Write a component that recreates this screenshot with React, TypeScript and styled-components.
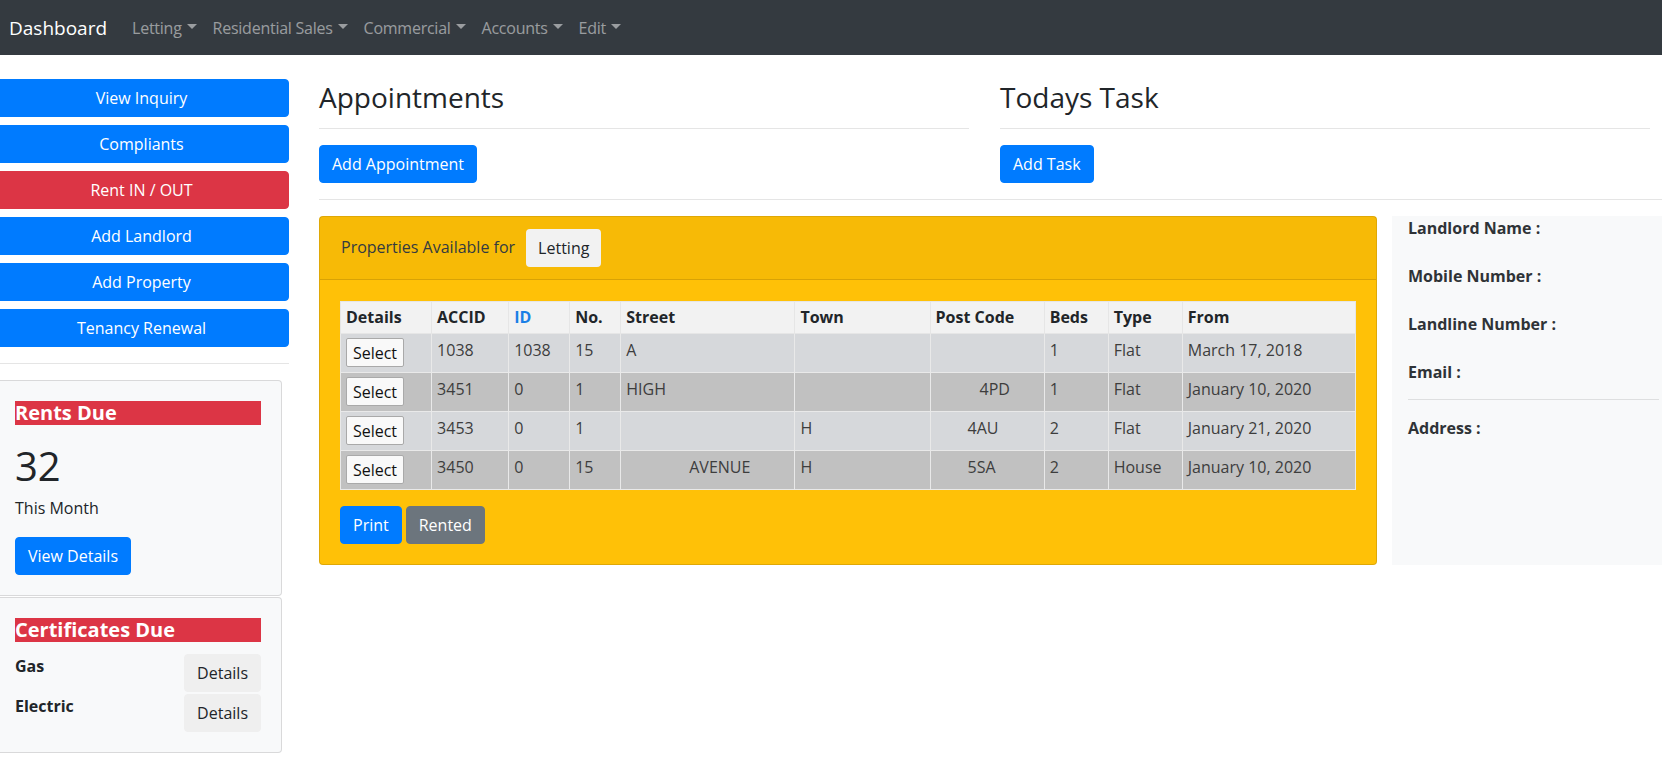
import React from "react";
import styled, { createGlobalStyle } from "styled-components";

const Global = createGlobalStyle`
  html, body { margin: 0; padding: 0; }
  body {
    font-family: "Open Sans", "Noto Sans", sans-serif;
    font-size: 16px;
    line-height: 1.5;
    color: #212529;
    background: #fff;
    width: 1662px;
    overflow: hidden;
  }
  * { box-sizing: border-box; }
  button { font-family: inherit; }
`;

const Page = styled.div`
  width: 1662px;
  min-height: 758px;
  overflow: hidden;
`;

const Navbar = styled.nav`
  height: 55px;
  background: #343a40;
  display: flex;
  align-items: center;
  padding: 0 9px;
`;

const Brand = styled.span`
  font-size: 19px;
  line-height: 30px;
  color: #fff;
  margin-right: 17px;
`;

const NavLink = styled.span`
  color: rgba(255, 255, 255, 0.5);
  padding: 0 8px;
  display: inline-flex;
  align-items: center;
  line-height: 24px;
  letter-spacing: -0.25px;
  &::after {
    content: "";
    display: inline-block;
    margin-left: 5px;
    margin-bottom: 3px;
    border-top: 5px solid;
    border-left: 5px solid transparent;
    border-right: 5px solid transparent;
  }
`;

const Layout = styled.div`
  display: flex;
  align-items: flex-start;
`;

const Sidebar = styled.aside`
  width: 295px;
  margin-left: -6px;
  padding-top: 24px;
  display: flex;
  flex-direction: column;
`;

const SideButton = styled.button<{ $tone?: "primary" | "danger" }>`
  height: 38px;
  width: 100%;
  border: 1px solid ${(p) => (p.$tone === "danger" ? "#dc3545" : "#007bff")};
  background: ${(p) => (p.$tone === "danger" ? "#dc3545" : "#007bff")};
  color: #fff;
  font-size: 16px;
  line-height: 24px;
  border-radius: 4px;
  padding: 6px 12px;
  margin-bottom: 8px;
  cursor: pointer;
`;

const Rule = styled.hr<{ $mt?: number; $mb?: number }>`
  border: 0;
  border-top: 1px solid rgba(0, 0, 0, 0.1);
  margin: ${(p) => p.$mt ?? 16}px 0 ${(p) => p.$mb ?? 16}px;
  height: 0;
`;

const SideCard = styled.section<{ $gap?: number }>`
  width: 288px;
  background: #f8f9fa;
  border: 1px solid rgba(0, 0, 0, 0.125);
  border-radius: 4px;
  padding: 20px;
  margin-bottom: ${(p) => p.$gap ?? 0}px;
`;

const RedTitle = styled.h5`
  margin: 0;
  background: #dc3545;
  color: #fff;
  font-size: 20px;
  line-height: 24px;
  font-weight: 700;
`;

const BigNumber = styled.div`
  font-size: 40px;
  line-height: 48px;
  font-weight: 500;
  margin-top: 17px;
`;

const CardText = styled.p`
  margin: 6px 0 17px;
  line-height: 24px;
`;

const Button = styled.button<{ $tone: "primary" | "secondary" | "light" }>`
  height: 38px;
  padding: 6px 12px;
  font-size: 16px;
  line-height: 24px;
  border-radius: 4px;
  border: 1px solid
    ${(p) => (p.$tone === "primary" ? "#007bff" : p.$tone === "secondary" ? "#6c757d" : "#efefef")};
  background: ${(p) => (p.$tone === "primary" ? "#007bff" : p.$tone === "secondary" ? "#6c757d" : "#efefef")};
  color: ${(p) => (p.$tone === "light" ? "#212529" : "#fff")};
  cursor: pointer;
`;

const CertList = styled.div`
  margin-top: 12px;
  display: flex;
  flex-direction: column;
  gap: 2px;
`;

const CertRow = styled.div`
  display: flex;
  justify-content: space-between;
  align-items: flex-start;
`;

const CertLabel = styled.span`
  font-weight: 700;
  line-height: 24px;
`;

const Main = styled.main`
  flex: 1;
  padding: 24px 0 0 30px;
  min-width: 0;
`;

const TopRow = styled.div`
  display: grid;
  grid-template-columns: 650px 650px;
  column-gap: 31px;
`;

const Column = styled.div`
  display: flex;
  flex-direction: column;
  align-items: flex-start;
`;

const Heading = styled.h2`
  margin: 0;
  font-size: 28px;
  line-height: 36px;
  font-weight: 500;
  color: #212529;
`;

const FullRule = styled.hr`
  border: 0;
  border-top: 1px solid rgba(0, 0, 0, 0.1);
  margin: 16px 0 16px;
  height: 0;
  width: 1400px;
`;

const ColumnRule = styled.hr`
  border: 0;
  border-top: 1px solid rgba(0, 0, 0, 0.1);
  margin: 13px 0 16px;
  height: 0;
  width: 100%;
`;

const BottomRow = styled.div`
  display: grid;
  grid-template-columns: 1058px 1fr;
  column-gap: 15px;
  align-items: stretch;
`;

const YellowCard = styled.section`
  background: #ffc107;
  border: 1px solid rgba(0, 0, 0, 0.125);
  border-radius: 4px;
  display: flex;
  flex-direction: column;
`;

const CardHeader = styled.div`
  display: flex;
  align-items: center;
  gap: 11px;
  padding: 12px 20px;
  background: rgba(0, 0, 0, 0.03);
  border-bottom: 1px solid rgba(0, 0, 0, 0.125);
  color: #212529;
`;

const HeaderText = styled.span`
  padding-left: 1px;
  margin-top: -3px;
  color: #343a40;
`;

const LightTag = styled.span`
  display: inline-flex;
  align-items: center;
  height: 38px;
  padding: 0 12px;
  background: #f2f2f2;
  border-radius: 4px;
  color: #212529;
`;

const CardBody = styled.div`
  padding: 21px 20px 20px;
`;

const Table = styled.table`
  width: 100%;
  border-collapse: collapse;
  table-layout: fixed;
  margin-bottom: 16px;
`;

const Th = styled.th<{ $w: number; $link?: boolean }>`
  width: ${(p) => p.$w}px;
  text-align: left;
  font-weight: 700;
  background: #f2f2f2;
  color: ${(p) => (p.$link ? "#1a7fe6" : "#212529")};
  padding: 3px 5px 4px;
  line-height: 24px;
  border: 1px solid #e6e6e6;
  white-space: nowrap;
`;

const Tr = styled.tr<{ $dark?: boolean }>`
  background: ${(p) => (p.$dark ? "#c1c1c1" : "#d6d8db")};
`;

const Td = styled.td`
  padding: 4px 5px 5px;
  line-height: 24px;
  vertical-align: top;
  color: #3d3d3d;
  border: 1px solid #e9e9e9;
  white-space: nowrap;
  overflow: hidden;
`;

const SelectButton = styled.button`
  width: 58px;
  height: 29px;
  padding: 0;
  background: #f9f9f9;
  border: 1px solid #a9a9a9;
  border-radius: 2px;
  font-size: 16px;
  color: #111;
`;

const Offset = styled.span<{ $x: number }>`
  margin-left: ${(p) => p.$x}px;
`;

const ActionRow = styled.div`
  display: flex;
  gap: 4px;
`;

const InfoPanel = styled.aside`
  background: #f8f9fa;
  padding: 0 13px 0 16px;
  margin-right: -10px;
`;

const InfoLabel = styled.div<{ $mb?: number }>`
  font-weight: 700;
  color: #2f3337;
  line-height: 24px;
  margin-bottom: ${(p) => p.$mb ?? 24}px;
`;

const rows = [
  { accid: "1038", id: "1038", no: "15", street: <>A</>, town: <></>, post: <></>, beds: "1", type: "Flat", from: "March 17, 2018" },
  { accid: "3451", id: "0", no: "1", street: <>HIGH</>, town: <></>, post: <Offset $x={44}>4PD</Offset>, beds: "1", type: "Flat", from: "January 10, 2020" },
  { accid: "3453", id: "0", no: "1", street: <></>, town: <>H</>, post: <Offset $x={32}>4AU</Offset>, beds: "2", type: "Flat", from: "January 21, 2020" },
  { accid: "3450", id: "0", no: "15", street: <Offset $x={63}>AVENUE</Offset>, town: <>H</>, post: <Offset $x={32}>5SA</Offset>, beds: "2", type: "House", from: "January 10, 2020" },
];

export default function App() {
  return (
    <Page>
      <Global />
      <Navbar>
        <Brand>Dashboard</Brand>
        <NavLink>Letting</NavLink>
        <NavLink>Residential Sales</NavLink>
        <NavLink>Commercial</NavLink>
        <NavLink>Accounts</NavLink>
        <NavLink>Edit</NavLink>
      </Navbar>
      <Layout>
        <Sidebar>
          <SideButton>View Inquiry</SideButton>
          <SideButton>Compliants</SideButton>
          <SideButton $tone="danger">Rent IN / OUT</SideButton>
          <SideButton>Add Landlord</SideButton>
          <SideButton>Add Property</SideButton>
          <SideButton>Tenancy Renewal</SideButton>
          <Rule $mt={8} $mb={16} />
          <SideCard $gap={1}>
            <RedTitle>Rents Due</RedTitle>
            <BigNumber>32</BigNumber>
            <CardText>This Month</CardText>
            <Button $tone="primary">View Details</Button>
          </SideCard>
          <SideCard>
            <RedTitle>Certificates Due</RedTitle>
            <CertList>
              <CertRow>
                <CertLabel>Gas</CertLabel>
                <Button $tone="light">Details</Button>
              </CertRow>
              <CertRow>
                <CertLabel>Electric</CertLabel>
                <Button $tone="light">Details</Button>
              </CertRow>
            </CertList>
          </SideCard>
        </Sidebar>
        <Main>
          <TopRow>
            <Column>
              <Heading>Appointments</Heading>
              <ColumnRule />
              <Button $tone="primary">Add Appointment</Button>
            </Column>
            <Column>
              <Heading>Todays Task</Heading>
              <ColumnRule />
              <Button $tone="primary">Add Task</Button>
            </Column>
          </TopRow>
          <FullRule />
          <BottomRow>
            <YellowCard>
              <CardHeader>
                <HeaderText>Properties Available for</HeaderText>
                <LightTag>Letting</LightTag>
              </CardHeader>
              <CardBody>
                <Table>
                  <thead>
                    <tr>
                      <Th $w={91}>Details</Th>
                      <Th $w={77}>ACCID</Th>
                      <Th $w={61} $link>ID</Th>
                      <Th $w={51}>No.</Th>
                      <Th $w={174}>Street</Th>
                      <Th $w={135}>Town</Th>
                      <Th $w={114}>Post Code</Th>
                      <Th $w={64}>Beds</Th>
                      <Th $w={74}>Type</Th>
                      <Th $w={173}>From</Th>
                    </tr>
                  </thead>
                  <tbody>
                    {rows.map((r, i) => (
                      <Tr key={r.accid} $dark={i % 2 === 1}>
                        <Td>
                          <SelectButton>Select</SelectButton>
                        </Td>
                        <Td>{r.accid}</Td>
                        <Td>{r.id}</Td>
                        <Td>{r.no}</Td>
                        <Td>{r.street}</Td>
                        <Td>{r.town}</Td>
                        <Td>{r.post}</Td>
                        <Td>{r.beds}</Td>
                        <Td>{r.type}</Td>
                        <Td>{r.from}</Td>
                      </Tr>
                    ))}
                  </tbody>
                </Table>
                <ActionRow>
                  <Button $tone="primary">Print</Button>
                  <Button $tone="secondary">Rented</Button>
                </ActionRow>
              </CardBody>
            </YellowCard>
            <InfoPanel>
              <InfoLabel>Landlord Name :</InfoLabel>
              <InfoLabel>Mobile Number :</InfoLabel>
              <InfoLabel>Landline Number :</InfoLabel>
              <InfoLabel $mb={15}>Email :</InfoLabel>
              <Rule $mt={0} $mb={16} />
              <InfoLabel>Address :</InfoLabel>
            </InfoPanel>
          </BottomRow>
        </Main>
      </Layout>
    </Page>
  );
}
